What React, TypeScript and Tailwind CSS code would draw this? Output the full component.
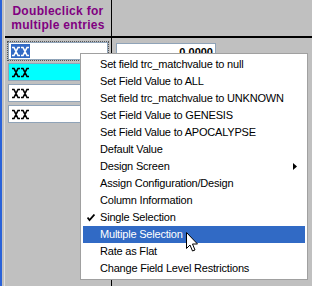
const items: { label: string; checked?: boolean; sub?: boolean; active?: boolean }[] = [
  { label: "Set field trc_matchvalue to null" },
  { label: "Set Field Value to ALL" },
  { label: "Set field trc_matchvalue to UNKNOWN" },
  { label: "Set Field Value to GENESIS" },
  { label: "Set Field Value to APOCALYPSE" },
  { label: "Default Value" },
  { label: "Design Screen", sub: true },
  { label: "Assign Configuration/Design" },
  { label: "Column Information" },
  { label: "Single Selection", checked: true },
  { label: "Multiple Selection", active: true },
  { label: "Rate as Flat" },
  { label: "Change Field Level Restrictions" },
];

// the "XX" placeholder glyphs drawn in the grid cells
function XX({ light }: { light?: boolean }) {
  const c = light ? "#ffffff" : "#000000";
  return (
    <svg width="17" height="11" viewBox="0 0 17 11">
      <path
        d="M0 1.5h2l4 8h2M0 9.5h2l4-8h2M9 1.5h2l4 8h2M9 9.5h2l4-8h2"
        fill="none"
        stroke={c}
        strokeWidth="1.6"
      />
    </svg>
  );
}

function Cell({ bg, selected }: { bg: string; selected?: boolean }) {
  return (
    <div
      className={`h-[18px] w-[100px] border border-[#8fa3b8] flex items-center pl-[2px] ${bg} ${
        selected ? "outline-1 outline-dotted outline-[#555]" : ""
      }`}
    >
      <div className={selected ? "bg-[#316ac5] px-[1px] h-[14px] flex items-center" : "px-[1px]"}>
        <XX light={selected} />
      </div>
    </div>
  );
}

export default function App() {
  return (
    <div
      className="relative w-[312px] h-[286px] overflow-hidden bg-[#c0c0c0] flex"
      style={{ fontFamily: "Tahoma, 'Liberation Sans', sans-serif" }}
    >
      <div className="w-[2px] bg-[#2a62d8]" />
      <div className="w-[2px] bg-[#c0c0c0]" />
      <div className="w-[1px] bg-[#e0e0e0]" />

      <div className="flex flex-col w-[106px]">
        <div className="h-[36px] flex flex-col items-center justify-center text-[12px] font-bold leading-[14px] text-[#800080] tracking-[0.3px]">
          <span>Doubleclick for</span>
          <span>multiple entries</span>
        </div>
        <div className="h-[2px] bg-black" />
        <div className="flex flex-col gap-[3px] pl-[3px] pt-[4px]">
          <Cell bg="bg-white" selected />
          <Cell bg="bg-[#00ffff]" />
          <Cell bg="bg-white" />
          <Cell bg="bg-white" />
        </div>
      </div>

      <div className="w-[1px] bg-black" />

      <div className="flex flex-col flex-1">
        <div className="h-[36px]" />
        <div className="h-[2px] bg-black" />
        <div className="pl-[4px] pt-[5px]">
          <div className="h-[18px] w-[100px] border border-[#8fa3b8] bg-white flex items-center justify-end pr-[2px] text-[11px] font-bold">
            0.0000
          </div>
        </div>
      </div>

      <div className="absolute left-[80px] top-[53px] w-[228px] bg-white border border-[#a0a0a0] p-[2px] text-[11px] tracking-[-0.2px] text-black">
        {items.map((it) => (
          <div
            key={it.label}
            className={`relative h-[17px] flex items-center pl-[17px] whitespace-nowrap ${
              it.active ? "bg-[#316ac5] text-white" : ""
            }`}
          >
            {it.checked && (
              <svg className="absolute left-[4px] top-[5px]" width="8" height="8" viewBox="0 0 8 8">
                <path d="M0.5 3.5l2 2.5 5-5.5" fill="none" stroke="#000" strokeWidth="1.8" />
              </svg>
            )}
            {it.label}
            {it.sub && (
              <svg className="absolute right-[8px] top-[5px]" width="4" height="7" viewBox="0 0 4 7">
                <path d="M0 0l4 3.5-4 3.5z" fill="#000" />
              </svg>
            )}
          </div>
        ))}
      </div>

      <svg className="absolute left-[186px] top-[232px]" width="13" height="21" viewBox="0 0 13 21">
        <path
          d="M0.5 0.5v16l3.5-3.5 2.5 6 2.5-1-2.5-6h5z"
          fill="#fff"
          stroke="#000"
          strokeWidth="1"
        />
      </svg>
    </div>
  );
}
